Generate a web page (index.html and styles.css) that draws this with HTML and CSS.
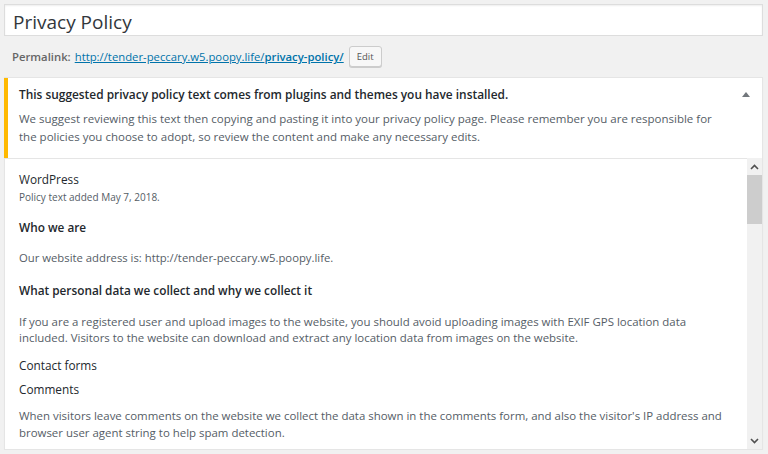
FILE: index.html
```html
<!DOCTYPE html>
<html lang="en">
<head>
<meta charset="utf-8">
<title>Privacy Policy</title>
<link rel="stylesheet" href="styles.css">
</head>
<body>
<div class="wrap">
  <div class="title-box">Privacy Policy</div>
  <div class="permalink-row">
    <span class="permalink-label">Permalink:</span>
    <a class="permalink-link" href="#">http://tender-peccary.w5.poopy.life/<b>privacy-policy/</b></a>
    <span class="edit-btn">Edit</span>
  </div>
  <div class="box">
    <div class="notice">
      <div class="notice-head">
        <span class="notice-title">This suggested privacy policy text comes from plugins and themes you have installed.</span>
        <svg class="toggle" width="8" height="5" viewBox="0 0 8 5"><path d="M0 5 L4 0 L8 5 Z" fill="#72777c"/></svg>
      </div>
      <p class="notice-text">We suggest reviewing this text then copying and pasting it into your privacy policy page. Please remember you are responsible for<br>the policies you choose to adopt, so review the content and make any necessary edits.</p>
    </div>
    <div class="scroll-row">
      <div class="content">
        <div class="source">WordPress</div>
        <div class="added">Policy text added May 7, 2018.</div>
        <h2 class="h-who">Who we are</h2>
        <p class="p-addr">Our website address is: http://tender-peccary.w5.poopy.life.</p>
        <h2 class="h-what">What personal data we collect and why we collect it</h2>
        <p class="p-media">If you are a registered user and upload images to the website, you should avoid uploading images with EXIF GPS location data<br>included. Visitors to the website can download and extract any location data from images on the website.</p>
        <h3 class="h-contact">Contact forms</h3>
        <h3 class="h-comments">Comments</h3>
        <p class="p-comments">When visitors leave comments on the website we collect the data shown in the comments form, and also the visitor's IP address and<br>browser user agent string to help spam detection.</p>
      </div>
      <div class="scrollbar">
        <div class="sb-btn"><svg width="9" height="6" viewBox="0 0 9 6"><path d="M1 5 L4.5 1.5 L8 5" fill="none" stroke="#505050" stroke-width="1.6"/></svg></div>
        <div class="sb-thumb"></div>
        <div class="sb-track"></div>
        <div class="sb-btn"><svg width="9" height="6" viewBox="0 0 9 6"><path d="M1 1 L4.5 4.5 L8 1" fill="none" stroke="#505050" stroke-width="1.6"/></svg></div>
      </div>
    </div>
  </div>
</div>
</body>
</html>
```
FILE: styles.css
```css
html, body {
  margin: 0;
  padding: 0;
  background: #f1f1f1;
}
body {
  font-family: "Open Sans", "Noto Sans", sans-serif;
  font-size: 11.45px;
  color: #555d66;
}
.wrap {
  padding: 4px 5px 0 4px;
}
.title-box {
  height: 32px;
  box-sizing: border-box;
  border: 1px solid #dddddd;
  background: #ffffff;
  box-shadow: inset 0 1px 2px rgba(0,0,0,0.07);
  padding: 3px 8px 0;
  font-size: 19px;
  line-height: 28px;
  color: #32373c;
}
.permalink-row {
  display: flex;
  align-items: center;
  margin-top: 10px;
  height: 21px;
  line-height: 21px;
  padding-left: 8px;
  font-size: 11.3px;
}
.permalink-label {
  color: #666666;
  font-weight: 600;
  margin-right: 4px;
}
.permalink-link {
  color: #0073aa;
  text-decoration: underline;
}
.permalink-link b {
  font-weight: 600;
}
.edit-btn {
  margin-left: 5px;
  height: 21px;
  box-sizing: border-box;
  width: 33px;
  text-align: center;
  border: 1px solid #cccccc;
  border-radius: 3px;
  background: #f7f7f7;
  box-shadow: 0 1px 0 #cccccc;
  font-size: 9.5px;
  line-height: 19px;
  color: #555555;
}
.box {
  margin-top: 10px;
  height: 373px;
  box-sizing: border-box;
  border: 1px solid #e5e5e5;
  background: #ffffff;
  box-shadow: 0 1px 1px rgba(0,0,0,0.04);
  display: flex;
  flex-direction: column;
}
.notice {
  margin-left: -1px;
  border-left: 4px solid #ffb900;
  padding: 8px 12px 12px 11px;
}
.notice-head {
  display: flex;
  align-items: center;
  justify-content: space-between;
  line-height: 17px;
}
.notice-title {
  font-size: 11.9px;
  font-weight: 600;
  color: #23282d;
}
.toggle {
  display: block;
  margin-top: -1px;
}
.notice-text {
  margin: 7px 0 0;
  line-height: 18px;
  font-size: 11.5px;
  white-space: nowrap;
}
.scroll-row {
  flex: 1;
  display: flex;
  min-height: 0;
}
.content {
  flex: 1;
  border-top: 1px solid #e5e5e5;
  padding: 12px 14px 0;
  overflow: hidden;
  white-space: nowrap;
}
.content h2, .content h3, .content p, .content div {
  margin: 0;
}
.source {
  font-size: 11.8px;
  line-height: 17px;
  color: #23282d;
}
.added {
  font-size: 10px;
  line-height: 14px;
  margin-top: 2px !important;
  color: #555d66;
}
.h-who, .h-what {
  font-size: 11.8px;
  line-height: 17px;
  font-weight: 600;
  color: #23282d;
}
.h-who { margin-top: 15px !important; }
.p-addr {
  font-size: 11.3px;
  line-height: 17px;
  margin-top: 13px !important;
}
.h-what { margin-top: 16px !important; }
.p-media {
  line-height: 16px;
  margin-top: 15px !important;
}
.h-contact, .h-comments {
  font-size: 11.8px;
  line-height: 17px;
  font-weight: 400;
  color: #23282d;
}
.h-contact { margin-top: 11px !important; }
.h-comments { margin-top: 7px !important; }
.p-comments {
  line-height: 16.5px;
  margin-top: 10px !important;
}
.scrollbar {
  width: 15px;
  background: #f1f1f1;
  display: flex;
  flex-direction: column;
}
.sb-btn {
  height: 17px;
  display: flex;
  align-items: center;
  justify-content: center;
}
.sb-thumb {
  height: 49px;
  background: #cdcdcd;
}
.sb-track {
  flex: 1;
}
```
